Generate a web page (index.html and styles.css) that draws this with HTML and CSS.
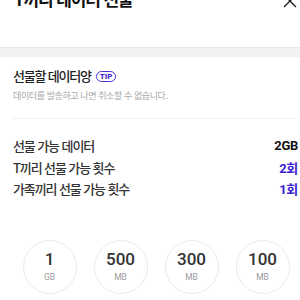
FILE: index.html
```html
<!DOCTYPE html>
<html lang="ko">
<head>
    <meta charset="UTF-8">
    <meta name="viewport" content="width=device-width, initial-scale=1.0">
    <title>T끼리 데이터 선물</title>
    <link rel="stylesheet" href="styles.css">
</head>
<body>
    <div class="header">
        <h1>T끼리 데이터 선물</h1>
        <button class="close-btn" aria-label="닫기">
            <svg width="14" height="14" viewBox="0 0 14 14"><path d="M1 1L13 13M13 1L1 13" stroke="#222" stroke-width="1.4" fill="none"/></svg>
        </button>
    </div>

    <div class="band"></div>

    <div class="section">
        <div class="section-title">
            <span>선물할 데이터양</span>
            <span class="tip">TIP</span>
        </div>
        <p class="notice">데이터를 발송하고 나면 취소할 수 없습니다.</p>
    </div>

    <div class="info-list">
        <div class="info-row">
            <span>선물 가능 데이터</span>
            <span class="value">2GB</span>
        </div>
        <div class="info-row">
            <span>T끼리 선물 가능 횟수</span>
            <span class="value accent">2회</span>
        </div>
        <div class="info-row">
            <span>가족끼리 선물 가능 횟수</span>
            <span class="value accent">1회</span>
        </div>
    </div>

    <div class="amounts">
        <button class="amount"><strong>1</strong><small>GB</small></button>
        <button class="amount"><strong>500</strong><small>MB</small></button>
        <button class="amount"><strong>300</strong><small>MB</small></button>
        <button class="amount"><strong>100</strong><small>MB</small></button>
    </div>
</body>
</html>
```

FILE: styles.css
```css
/* General styling */
body {
    margin: 0;
    font-family: "Noto Sans CJK KR", "Noto Sans", sans-serif;
    color: #222;
    background-color: #fff;
}

/* Header */
.header {
    display: flex;
    justify-content: space-between;
    align-items: flex-start;
    margin-top: -13px;
    height: 60px;
    padding: 0 3px 0 14px;
}

.header h1 {
    margin: 0;
    font-size: 17px;
    line-height: 24px;
    font-weight: 700;
    color: #111;
    letter-spacing: -1.1px;
}

.close-btn {
    background: none;
    border: none;
    padding: 0;
    margin-top: 7px;
    width: 14px;
    height: 14px;
}

.band {
    height: 9px;
    background-color: #f2f2f4;
    border-top: 1px solid #e9e9ec;
}

/* Amount section */
.section {
    padding: 9px 12px 0 13px;
}

.section-title {
    display: flex;
    align-items: center;
    gap: 5px;
    font-size: 13px;
    line-height: 20px;
    font-weight: 500;
    color: #222;
}

.section-title span:first-child {
    letter-spacing: -1.2px;
}

.tip {
    font-family: "Roboto", sans-serif;
    font-size: 8px;
    font-weight: 900;
    line-height: 9px;
    color: #4a2fd4;
    border: 1.3px solid #4a2fd4;
    border-radius: 6px;
    padding: 0 3px;
}

.notice {
    margin: 3px 0 0;
    font-size: 9px;
    line-height: 14px;
    color: #a8a8a8;
    letter-spacing: -0.4px;
}

/* Info rows */
.info-list {
    margin: 15px 2px 0 12px;
    padding-top: 16px;
    border-top: 1px solid #f1f1f1;
}

.info-row {
    display: flex;
    justify-content: space-between;
    align-items: center;
    height: 21.5px;
    font-size: 13px;
    font-weight: 500;
    color: #333;
    padding-left: 1px;
    letter-spacing: -1.1px;
}

.info-row .value {
    font-family: "Roboto", "Noto Sans CJK KR", sans-serif;
    font-weight: 700;
    color: #111;
    letter-spacing: -0.3px;
}

.info-row .value.accent {
    color: #3b22cf;
}

/* Amount circles */
.amounts {
    display: flex;
    justify-content: center;
    gap: 17px;
    margin-top: 40px;
    padding-left: 12px;
}

.amount {
    width: 54px;
    height: 54px;
    border-radius: 50%;
    border: 1px solid #ebebeb;
    background: #fff;
    display: flex;
    flex-direction: column;
    align-items: center;
    justify-content: center;
    padding: 0;
    font-family: "Roboto", sans-serif;
}

.amount strong {
    font-size: 17px;
    line-height: 19px;
    font-weight: 500;
    color: #333;
}

.amount small {
    font-size: 8.5px;
    line-height: 12px;
    color: #9a9a9a;
    margin-top: 2px;
}
```
